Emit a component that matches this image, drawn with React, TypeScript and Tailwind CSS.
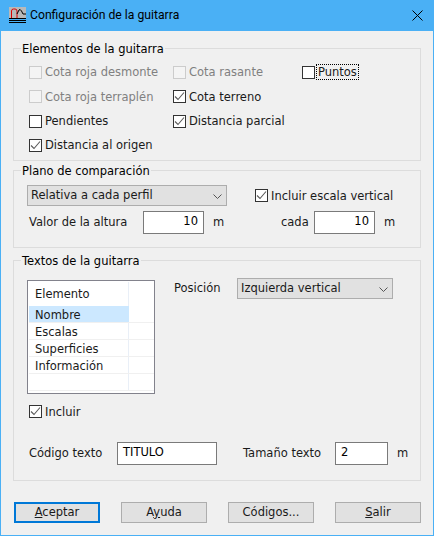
import React from "react";

function Check({ label, checked, disabled, focus }: { label: string; checked?: boolean; disabled?: boolean; focus?: boolean }) {
  return (
    <div className="flex items-center h-full">
      <span className={"w-[13px] h-[13px] border shrink-0 flex items-center justify-center " + (disabled ? "border-[#cccccc] bg-[#f4f4f4]" : "border-[#333333] bg-white")}>
        {checked && (
          <svg width="11" height="11" viewBox="0 0 11 11" fill="none">
            <path d="M1 5.5 L4 8.5 L10 1.5" stroke="#5a5a5a" strokeWidth="1.1" />
          </svg>
        )}
      </span>
      <span className={"ml-[1px] px-[1px] whitespace-nowrap leading-[14px] border border-dotted " + (focus ? "border-black" : "border-transparent") + (disabled ? " text-[#808080]" : " text-[#1a1a1a]")}>
        {label}
      </span>
    </div>
  );
}

function Group({ title, className, children }: { title: string; className: string; children: React.ReactNode }) {
  return (
    <section className={"relative border border-[#dcdcdc] " + className}>
      <span className="absolute left-[7px] top-[-7px] bg-[#f0f0f0] px-[1px] leading-[14px] text-black whitespace-nowrap">{title}</span>
      {children}
    </section>
  );
}

function Select({ value, className }: { value: string; className: string }) {
  return (
    <div className={"h-[21px] bg-[#e1e1e1] border border-[#adadad] flex items-center justify-between pl-[3px] pr-[4px] pt-[1px] " + className}>
      <span className="text-[#1a1a1a] whitespace-nowrap">{value}</span>
      <svg width="9" height="5" viewBox="0 0 9 5" fill="none">
        <path d="M0.5 0.5 L4.5 4.5 L8.5 0.5" stroke="#555555" />
      </svg>
    </div>
  );
}

function Input({ value, right, className }: { value: string; right?: boolean; className: string }) {
  return (
    <div className={"h-[23px] bg-white border border-[#7a7a7a] pt-[2px] leading-[14px] text-black px-[5px] " + (right ? "text-right " : "") + className}>
      {value}
    </div>
  );
}

function Btn({ children, primary }: { children: React.ReactNode; primary?: boolean }) {
  return (
    <button className={"w-[86px] h-[21px] bg-[#e1e1e1] flex items-center justify-center text-[#1a1a1a] " + (primary ? "border-2 border-[#0078d7]" : "border border-[#adadad]")}>
      {children}
    </button>
  );
}

export default function App() {
  return (
    <div className="w-[434px] h-[536px] flex flex-col bg-[#f0f0f0] border border-t-0 border-[#4ab0f5] font-['DejaVu_Sans',sans-serif] text-[11.5px] overflow-hidden">
      <header className="h-[31px] shrink-0 -mx-[1px] bg-[#4ab0f5] flex items-center pl-[9px] pr-[11px]">
        <svg width="17" height="17" viewBox="0 0 17 17" fill="none" className="shrink-0">
          <rect x="0" y="0" width="17" height="11" fill="#b9b9b9" />
          <path d="M2.5 11 V4 Q2.5 2 4.5 2 H6 Q8 2 8 4 V11" stroke="#e00000" strokeWidth="1" />
          <path d="M8 7 L10 3 Q11 1.5 12.5 4 L14 7 H17" stroke="#000000" strokeWidth="1" />
          <path d="M0 11.5 H17 M0 13.5 H17 M0 15.5 H17" stroke="#000000" strokeWidth="1" />
        </svg>
        <span className="ml-[4px] font-['Roboto',sans-serif] text-[12.2px] text-black flex-1">Configuración de la guitarra</span>
        <svg width="11" height="11" viewBox="0 0 11 11" fill="none">
          <path d="M0.5 0.5 L10.5 10.5 M10.5 0.5 L0.5 10.5" stroke="#000000" />
        </svg>
      </header>

      <main className="flex-1 flex flex-col pl-[12px] pr-[12px] pt-[17px]">
        <Group title="Elementos de la guitarra" className="h-[113px] pt-[11px] pl-[15px]">
          <div className="grid grid-cols-[144px_129px_1fr] grid-rows-[24px_25px_24px_24px]">
            <Check label="Cota roja desmonte" disabled />
            <Check label="Cota rasante" disabled />
            <Check label="Puntos" focus />
            <Check label="Cota roja terraplén" disabled />
            <Check label="Cota terreno" checked />
            <span />
            <Check label="Pendientes" />
            <Check label="Distancia parcial" checked />
            <span />
            <Check label="Distancia al origen" checked />
          </div>
        </Group>

        <Group title="Plano de comparación" className="h-[78px] mt-[9px] pt-[14px] pl-[13px]">
          <div className="flex items-center">
            <Select value="Relativa a cada perfil" className="w-[200px]" />
            <div className="ml-[28px] h-[21px]">
              <Check label="Incluir escala vertical" checked />
            </div>
          </div>
          <div className="flex items-center mt-[5px] pl-[2px] text-[#1a1a1a]">
            <span className="w-[114px] pt-[1px]">Valor de la altura</span>
            <Input value="10" right className="w-[61px]" />
            <span className="ml-[9px] w-[68px] pt-[1px]">m</span>
            <span className="w-[33px] pt-[1px]">cada</span>
            <Input value="10" right className="w-[61px]" />
            <span className="ml-[9px] pt-[1px]">m</span>
          </div>
        </Group>

        <Group title="Textos de la guitarra" className="h-[221px] mt-[12px] pt-[17px] pl-[13px]">
          <div className="flex items-start">
            <div className="mt-[2px] w-[128px] h-[114px] bg-white border border-[#82828c] pl-[1px] pt-[1px] text-[#1a1a1a] shrink-0">
              <div className="h-[24px] w-[100px] pl-[6px] pt-[2px] flex items-center border-r border-[#e9eff7]">Elemento</div>
              {["Nombre", "Escalas", "Superficies", "Información", ""].map((t, i) => (
                <div key={i} className="flex h-[17px] border-b border-[#f0f0f0]">
                  <div className={"w-[100px] pl-[6px] leading-[18px] border-r " + (i === 0 ? "bg-[#cce8ff] border-[#cce8ff]" : "border-[#e9eff7]")}>{t}</div>
                </div>
              ))}
            </div>
            <div className="flex items-center ml-[19px] text-[#1a1a1a]">
              <span className="w-[63px] pt-[1px]">Posición</span>
              <Select value="Izquierda vertical" className="w-[156px]" />
            </div>
          </div>
          <div className="h-[13px] mt-[11px] pl-[2px]">
            <Check label="Incluir" checked />
          </div>
          <div className="flex items-center mt-[24px] pl-[2px] text-[#1a1a1a]">
            <span className="w-[88px] pt-[1px]">Código texto</span>
            <Input value="TITULO" className="w-[100px]" />
            <span className="ml-[26px] w-[92px] pt-[1px]">Tamaño texto</span>
            <Input value="2" className="w-[53px]" />
            <span className="ml-[9px] pt-[1px]">m</span>
          </div>
        </Group>

        <footer className="flex justify-between mt-[21px] pl-[1px]">
          <Btn primary><span><u>A</u>ceptar</span></Btn>
          <Btn><span>A<u>y</u>uda</span></Btn>
          <Btn>Códigos...</Btn>
          <Btn><span><u>S</u>alir</span></Btn>
        </footer>
      </main>
    </div>
  );
}
